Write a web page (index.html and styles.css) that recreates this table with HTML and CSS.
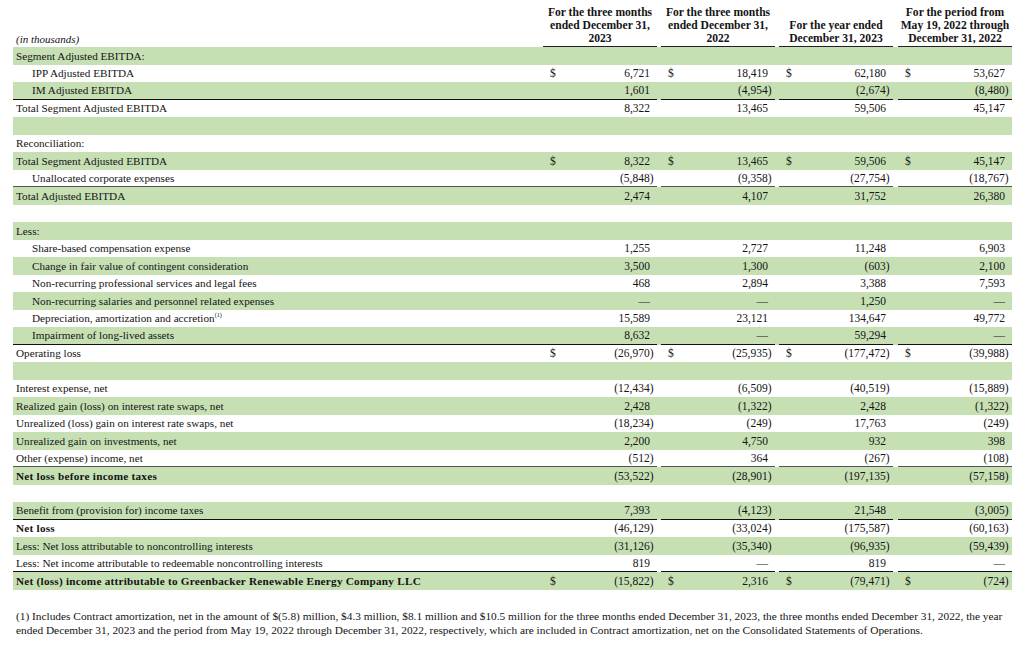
FILE: index.html
```html
<!DOCTYPE html>
<html lang="en">
<head>
<meta charset="utf-8">
<title>Segment Adjusted EBITDA reconciliation</title>
<link rel="stylesheet" href="styles.css">
</head>
<body>
<div class="page">
<table class="fin">
<colgroup>
<col class="c-label"><col class="c-num"><col class="c-gap"><col class="c-num"><col class="c-gap"><col class="c-num"><col class="c-gap5"><col class="c-num">
</colgroup>
<thead>
<tr>
<th class="lab-h">(in thousands)</th>
<th class="num-h">For the three months ended December 31, 2023</th><th class="gap-h"></th>
<th class="num-h">For the three months ended December 31, 2022</th><th class="gap-h"></th>
<th class="num-h">For the year ended<br>December 31, 2023</th><th class="gap-h"></th>
<th class="num-h">For the period from May 19, 2022 through December 31, 2022</th>
</tr>
</thead>
<tbody>
<tr class="g"><td class="lab">Segment Adjusted EBITDA:</td><td></td><td></td><td></td><td></td><td></td><td></td><td></td></tr>
<tr><td class="lab ind">IPP Adjusted EBITDA</td><td class="n"><span class="d">$</span>6,721</td><td></td><td class="n"><span class="d">$</span>18,419</td><td></td><td class="n"><span class="d">$</span>62,180</td><td></td><td class="n"><span class="d">$</span>53,627</td></tr>
<tr class="g ub"><td class="lab ind">IM Adjusted EBITDA</td><td class="n">1,601</td><td></td><td class="n">(4,954<span class="p">)</span></td><td></td><td class="n">(2,674<span class="p">)</span></td><td></td><td class="n">(8,480<span class="p">)</span></td></tr>
<tr><td class="lab">Total Segment Adjusted EBITDA</td><td class="n">8,322</td><td></td><td class="n">13,465</td><td></td><td class="n">59,506</td><td></td><td class="n">45,147</td></tr>
<tr class="g"><td class="lab"></td><td></td><td></td><td></td><td></td><td></td><td></td><td></td></tr>
<tr><td class="lab">Reconciliation:</td><td></td><td></td><td></td><td></td><td></td><td></td><td></td></tr>
<tr class="g"><td class="lab">Total Segment Adjusted EBITDA</td><td class="n"><span class="d">$</span>8,322</td><td></td><td class="n"><span class="d">$</span>13,465</td><td></td><td class="n"><span class="d">$</span>59,506</td><td></td><td class="n"><span class="d">$</span>45,147</td></tr>
<tr class="ug"><td class="lab ind">Unallocated corporate expenses</td><td class="n">(5,848<span class="p">)</span></td><td></td><td class="n">(9,358<span class="p">)</span></td><td></td><td class="n">(27,754<span class="p">)</span></td><td></td><td class="n">(18,767<span class="p">)</span></td></tr>
<tr class="g"><td class="lab">Total Adjusted EBITDA</td><td class="n">2,474</td><td></td><td class="n">4,107</td><td></td><td class="n">31,752</td><td></td><td class="n">26,380</td></tr>
<tr><td class="lab"></td><td></td><td></td><td></td><td></td><td></td><td></td><td></td></tr>
<tr class="g"><td class="lab">Less:</td><td></td><td></td><td></td><td></td><td></td><td></td><td></td></tr>
<tr><td class="lab ind">Share-based compensation expense</td><td class="n">1,255</td><td></td><td class="n">2,727</td><td></td><td class="n">11,248</td><td></td><td class="n">6,903</td></tr>
<tr class="g"><td class="lab ind">Change in fair value of contingent consideration</td><td class="n">3,500</td><td></td><td class="n">1,300</td><td></td><td class="n">(603<span class="p">)</span></td><td></td><td class="n">2,100</td></tr>
<tr><td class="lab ind">Non-recurring professional services and legal fees</td><td class="n">468</td><td></td><td class="n">2,894</td><td></td><td class="n">3,388</td><td></td><td class="n">7,593</td></tr>
<tr class="g"><td class="lab ind">Non-recurring salaries and personnel related expenses</td><td class="n">—</td><td></td><td class="n">—</td><td></td><td class="n">1,250</td><td></td><td class="n">—</td></tr>
<tr><td class="lab ind">Depreciation, amortization and accretion<sup class="fn">(1)</sup></td><td class="n">15,589</td><td></td><td class="n">23,121</td><td></td><td class="n">134,647</td><td></td><td class="n">49,772</td></tr>
<tr class="g ub"><td class="lab ind">Impairment of long-lived assets</td><td class="n">8,632</td><td></td><td class="n">—</td><td></td><td class="n">59,294</td><td></td><td class="n">—</td></tr>
<tr><td class="lab">Operating loss</td><td class="n"><span class="d">$</span>(26,970<span class="p">)</span></td><td></td><td class="n"><span class="d">$</span>(25,935<span class="p">)</span></td><td></td><td class="n"><span class="d">$</span>(177,472<span class="p">)</span></td><td></td><td class="n"><span class="d">$</span>(39,988<span class="p">)</span></td></tr>
<tr class="g"><td class="lab"></td><td></td><td></td><td></td><td></td><td></td><td></td><td></td></tr>
<tr><td class="lab">Interest expense, net</td><td class="n">(12,434<span class="p">)</span></td><td></td><td class="n">(6,509<span class="p">)</span></td><td></td><td class="n">(40,519<span class="p">)</span></td><td></td><td class="n">(15,889<span class="p">)</span></td></tr>
<tr class="g"><td class="lab">Realized gain (loss) on interest rate swaps, net</td><td class="n">2,428</td><td></td><td class="n">(1,322<span class="p">)</span></td><td></td><td class="n">2,428</td><td></td><td class="n">(1,322<span class="p">)</span></td></tr>
<tr><td class="lab">Unrealized (loss) gain on interest rate swaps, net</td><td class="n">(18,234<span class="p">)</span></td><td></td><td class="n">(249<span class="p">)</span></td><td></td><td class="n">17,763</td><td></td><td class="n">(249<span class="p">)</span></td></tr>
<tr class="g"><td class="lab">Unrealized gain on investments, net</td><td class="n">2,200</td><td></td><td class="n">4,750</td><td></td><td class="n">932</td><td></td><td class="n">398</td></tr>
<tr class="ug"><td class="lab">Other (expense) income, net</td><td class="n">(512<span class="p">)</span></td><td></td><td class="n">364</td><td></td><td class="n">(267<span class="p">)</span></td><td></td><td class="n">(108<span class="p">)</span></td></tr>
<tr class="g"><td class="lab b">Net loss before income taxes</td><td class="n">(53,522<span class="p">)</span></td><td></td><td class="n">(28,901<span class="p">)</span></td><td></td><td class="n">(197,135<span class="p">)</span></td><td></td><td class="n">(57,158<span class="p">)</span></td></tr>
<tr><td class="lab"></td><td></td><td></td><td></td><td></td><td></td><td></td><td></td></tr>
<tr class="g ub"><td class="lab">Benefit from (provision for) income taxes</td><td class="n">7,393</td><td></td><td class="n">(4,123<span class="p">)</span></td><td></td><td class="n">21,548</td><td></td><td class="n">(3,005<span class="p">)</span></td></tr>
<tr><td class="lab b">Net loss</td><td class="n">(46,129<span class="p">)</span></td><td></td><td class="n">(33,024<span class="p">)</span></td><td></td><td class="n">(175,587<span class="p">)</span></td><td></td><td class="n">(60,163<span class="p">)</span></td></tr>
<tr class="g"><td class="lab">Less: Net loss attributable to noncontrolling interests</td><td class="n">(31,126<span class="p">)</span></td><td></td><td class="n">(35,340<span class="p">)</span></td><td></td><td class="n">(96,935<span class="p">)</span></td><td></td><td class="n">(59,439<span class="p">)</span></td></tr>
<tr class="ub"><td class="lab">Less: Net income attributable to redeemable noncontrolling interests</td><td class="n">819</td><td></td><td class="n">—</td><td></td><td class="n">819</td><td></td><td class="n">—</td></tr>
<tr class="g"><td class="lab b">Net (loss) income attributable to Greenbacker Renewable Energy Company LLC</td><td class="n"><span class="d">$</span>(15,822<span class="p">)</span></td><td></td><td class="n"><span class="d">$</span>2,316</td><td></td><td class="n"><span class="d">$</span>(79,471<span class="p">)</span></td><td></td><td class="n"><span class="d">$</span>(724<span class="p">)</span></td></tr>
</tbody>
</table>
<p class="note">(1) Includes Contract amortization, net in the amount of $(5.8) million, $4.3 million, $8.1 million and $10.5 million for the three months ended December 31, 2023, the three months ended December 31, 2022, the year<br>ended December 31, 2023 and the period from May 19, 2022 through December 31, 2022, respectively, which are included in Contract amortization, net on the Consolidated Statements of Operations.</p>
</div>
</body>
</html>
```
FILE: styles.css
```css
html, body {
  margin: 0;
  padding: 0;
  background: #fff;
}
body {
  font-family: "Liberation Serif", "Times New Roman", serif;
  color: #141414;
  font-size: 11.2px;
}
.page {
  padding: 6px 12px 0 13px;
}
.fin {
  width: 999px;
  table-layout: fixed;
  border-collapse: separate;
  border-spacing: 0;
}
.c-label { width: 530px; }
.c-num { width: 114px; }
.c-gap { width: 4px; }
.c-gap5 { width: 5px; }

.fin th {
  padding: 0 0 1px 0;
  vertical-align: bottom;
  line-height: 13px;
}
.lab-h {
  text-align: left;
  font-style: italic;
  font-weight: normal;
  font-size: 11px;
  padding-left: 3px !important;
}
.num-h {
  text-align: center;
  font-weight: bold;
  font-size: 11.6px;
  border-bottom: 1px solid #222;
}
.fin tbody tr {
  height: 17.5px;
}
.fin td {
  padding: 0;
  line-height: 16px;
  vertical-align: middle;
  white-space: nowrap;
}
.fin tr.g td {
  background: #c6e0b4;
}
.fin tr.ub td:nth-child(1),
.fin tr.ub td:nth-child(2),
.fin tr.ub td:nth-child(4),
.fin tr.ub td:nth-child(6),
.fin tr.ub td:nth-child(8) {
  border-bottom: 1px solid #111;
}
.fin tr.ug td:nth-child(1),
.fin tr.ug td:nth-child(2),
.fin tr.ug td:nth-child(4),
.fin tr.ug td:nth-child(6),
.fin tr.ug td:nth-child(8) {
  border-bottom: 1px solid #555;
}
.lab {
  padding-left: 3px !important;
  font-size: 11.2px;
}
.lab.ind {
  padding-left: 19px !important;
}
.lab.b {
  font-weight: bold;
  font-size: 11.2px;
  letter-spacing: 0.25px;
}
.n {
  text-align: right;
  padding: 0 7px !important;
  font-size: 11.5px;
}
.d {
  float: left;
}
.p {
  margin-right: -3.5px;
}
.fn {
  font-size: 6px;
  vertical-align: 5px;
  line-height: 0;
}
.note {
  margin: 19px 0 0 3px;
  font-size: 11.35px;
  line-height: 14px;
}
```
